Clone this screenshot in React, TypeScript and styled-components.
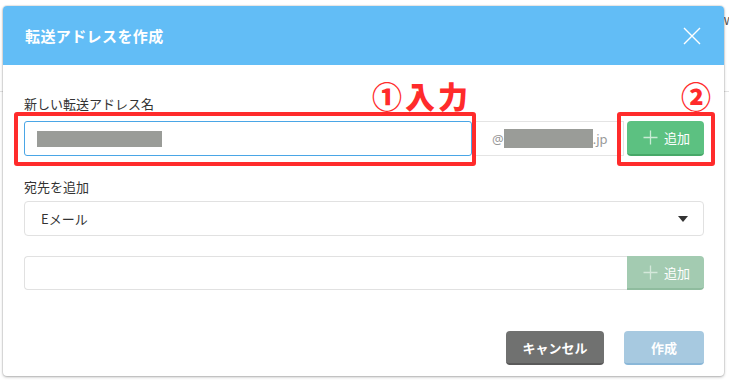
import React from "react";
import styled, { createGlobalStyle } from "styled-components";

const GlobalStyle = createGlobalStyle`
  html, body { margin: 0; padding: 0; background: #fff; }
  body { font-family: "Noto Sans CJK JP", "Noto Sans", sans-serif; color: #333; }
  * { box-sizing: border-box; }
`;

const Page = styled.div`
  position: relative;
  width: 729px;
  height: 387px;
  padding: 6px 0 0 3px;
  overflow: hidden;
  background: linear-gradient(#e2e2e2, #e2e2e2) 0 91px / 100% 1px no-repeat, #fff;
`;

const BackText = styled.span`
  position: absolute;
  left: 724px;
  top: 12px;
  font-family: "Liberation Sans", sans-serif;
  font-size: 14px;
  color: #555;
`;

const Modal = styled.div`
  position: relative;
  width: 721px;
  background: #fff;
  border-radius: 4px;
  box-shadow: 0 1px 3px rgba(0, 0, 0, 0.3), 0 0 0 1px rgba(0, 0, 0, 0.06);
`;

const Header = styled.div`
  height: 59px;
  background: #62bdf6;
  border-radius: 4px 4px 0 0;
  display: flex;
  align-items: center;
  justify-content: space-between;
  padding: 0 23px 0 22px;
`;

const Title = styled.h1`
  margin: 0;
  font-size: 15px;
  font-weight: 700;
  color: #fff;
  letter-spacing: 0.4px;
`;

const CloseButton = styled.button`
  width: 18px;
  height: 18px;
  padding: 0;
  border: 0;
  background: none;
  display: flex;
  cursor: pointer;
`;

const Body = styled.div`
  padding: 30px 20px 11px 21px;
`;

const FieldLabel = styled.div<{ $gap: number; $mt?: number }>`
  font-size: 13px;
  line-height: 18px;
  color: #333;
  margin-top: ${(p) => p.$mt ?? 0}px;
  margin-bottom: ${(p) => p.$gap}px;
`;

const Row = styled.div<{ $h: number; $mt?: number }>`
  display: flex;
  height: ${(p) => p.$h}px;
  margin-top: ${(p) => p.$mt ?? 0}px;
`;

const NameInput = styled.div`
  flex: 0 0 448px;
  border: 1px solid #4aa6e6;
  border-radius: 3px;
  display: flex;
  align-items: center;
  padding-left: 12px;
`;

const Redact = styled.div<{ $w: number; $h: number }>`
  width: ${(p) => p.$w}px;
  height: ${(p) => p.$h}px;
  background: #9a9c98;
`;

const DomainAddon = styled.div`
  flex: 0 0 152px;
  border-top: 1px solid #e4e4e4;
  border-bottom: 1px solid #e4e4e4;
  border-right: 1px solid #e4e4e4;
  display: flex;
  align-items: center;
  padding-left: 20px;
  font-size: 13px;
  color: #999;
  font-family: "Noto Sans", sans-serif;
`;

const AddButton = styled.button<{ $disabled?: boolean }>`
  flex: 0 0 77px;
  margin-left: ${(p) => (p.$disabled ? 0 : 3)}px;
  border: 0;
  border-bottom: 2px solid ${(p) => (p.$disabled ? "#8fbc9e" : "#47a868")};
  border-radius: ${(p) => (p.$disabled ? "0 4px 4px 0" : "4px")};
  background: ${(p) => (p.$disabled ? "#a3cbb1" : "#5cc181")};
  color: #fff;
  font-family: inherit;
  font-size: 13px;
  display: flex;
  align-items: center;
  justify-content: center;
  gap: 6px;
  padding: 0 0 0 2px;
`;

const SelectBox = styled.div`
  height: 35px;
  border: 1px solid #e1e1e1;
  border-radius: 4px;
  display: flex;
  align-items: center;
  justify-content: space-between;
  padding: 0 15px 0 16px;
  font-size: 13px;
  color: #333;
`;

const Caret = styled.span`
  width: 0;
  height: 0;
  border-left: 5.5px solid transparent;
  border-right: 5.5px solid transparent;
  border-top: 6px solid #333;
`;

const PlainInput = styled.div`
  flex: 1;
  border: 1px solid #e1e1e1;
  border-right: 0;
  border-radius: 4px 0 0 4px;
`;

const Footer = styled.div`
  display: flex;
  justify-content: flex-end;
  gap: 20px;
  margin-top: 41px;
`;

const FooterButton = styled.button<{ $variant: "cancel" | "create" }>`
  height: 34px;
  width: ${(p) => (p.$variant === "cancel" ? 98 : 80)}px;
  border: 0;
  border-radius: 4px;
  border-bottom: 2px solid ${(p) => (p.$variant === "cancel" ? "#5a5a5a" : "#8ab7d8")};
  background: ${(p) => (p.$variant === "cancel" ? "#707170" : "#a7c9e0")};
  color: #fff;
  font-family: inherit;
  font-weight: 700;
  font-size: 13px;
  padding: 0;
`;

const RedBox = styled.div<{ $x: number; $y: number; $w: number; $h: number }>`
  position: absolute;
  left: ${(p) => p.$x}px;
  top: ${(p) => p.$y}px;
  width: ${(p) => p.$w}px;
  height: ${(p) => p.$h}px;
  border: 4px solid #ff2b2b;
  border-radius: 3px;
  pointer-events: none;
`;

const Annotation = styled.div<{ $x: number; $y: number }>`
  position: absolute;
  left: ${(p) => p.$x}px;
  top: ${(p) => p.$y}px;
  color: #ff2b2b;
  font-weight: 900;
  font-size: 30px;
  line-height: 30px;
  letter-spacing: 3px;
  white-space: nowrap;
`;

const Plus = ({ color }: { color: string }) => (
  <svg width="15" height="15" viewBox="0 0 15 15">
    <path d="M7.5 0.5v14M0.5 7.5h14" stroke={color} strokeWidth="1.3" fill="none" />
  </svg>
);

export default function App() {
  return (
    <>
      <GlobalStyle />
      <Page>
        <BackText>w</BackText>
        <Modal>
          <Header>
            <Title>転送アドレスを作成</Title>
            <CloseButton aria-label="close">
              <svg width="18" height="18" viewBox="0 0 18 18">
                <path d="M1 1L17 17M17 1L1 17" stroke="#fff" strokeWidth="1.4" fill="none" />
              </svg>
            </CloseButton>
          </Header>
          <Body>
            <FieldLabel $gap={8}>新しい転送アドレス名</FieldLabel>
            <Row $h={35}>
              <NameInput>
                <Redact $w={125} $h={16} />
              </NameInput>
              <DomainAddon>
                @<Redact $w={89} $h={19} />.jp
              </DomainAddon>
              <AddButton>
                <Plus color="#c9ecd5" />
                追加
              </AddButton>
            </Row>
            <FieldLabel $gap={5} $mt={22}>宛先を追加</FieldLabel>
            <SelectBox>
              <span>Eメール</span>
              <Caret />
            </SelectBox>
            <Row $h={34} $mt={20}>
              <PlainInput />
              <AddButton $disabled>
                <Plus color="#d4e8da" />
                追加
              </AddButton>
            </Row>
            <Footer>
              <FooterButton $variant="cancel">キャンセル</FooterButton>
              <FooterButton $variant="create">作成</FooterButton>
            </Footer>
          </Body>
        </Modal>
        <RedBox $x={14} $y={112} $w={462} $h={54} />
        <RedBox $x={617} $y={112} $w={98} $h={54} />
        <Annotation $x={372} $y={80}>①入力</Annotation>
        <Annotation $x={681} $y={80}>②</Annotation>
      </Page>
    </>
  );
}
